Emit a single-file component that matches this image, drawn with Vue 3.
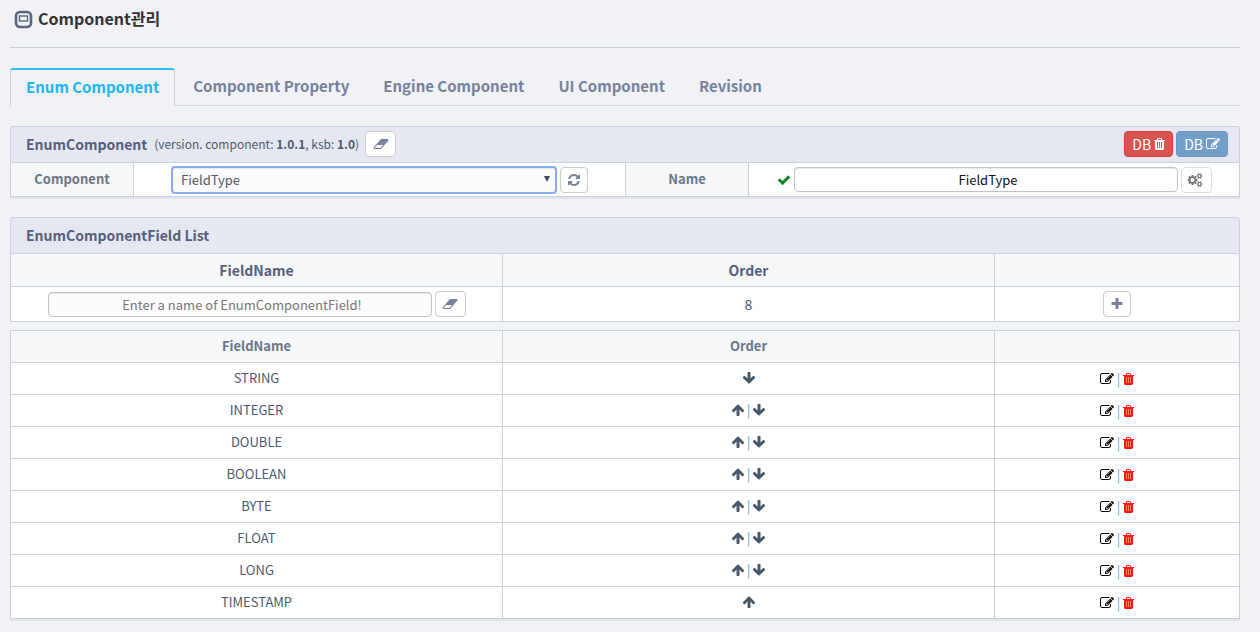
<script setup>
import { ref } from 'vue'

const icons = {
  trash: { x: 192, w: 1408, d: 'M704 1376v-704q0-14-9-23t-23-9h-64q-14 0-23 9t-9 23v704q0 14 9 23t23 9h64q14 0 23-9t9-23zm256 0v-704q0-14-9-23t-23-9h-64q-14 0-23 9t-9 23v704q0 14 9 23t23 9h64q14 0 23-9t9-23zm256 0v-704q0-14-9-23t-23-9h-64q-14 0-23 9t-9 23v704q0 14 9 23t23 9h64q14 0 23-9t9-23zm-544-992h448l-48-117q-7-9-17-11h-317q-10 2-17 11zm928 32v64q0 14-9 23t-23 9h-96v948q0 83-47 143.500t-113 60.500h-832q-66 0-113-58.500t-47-141.500v-952h-96q-14 0-23-9t-9-23v-64q0-14 9-23t23-9h309l70-167q15-37 54-63t79-26h320q40 0 79 26t54 63l70 167h309q14 0 23 9t9 23z' },
  edit: { x: 0, w: 1792, d: 'M888 1184l116-116-152-152-116 116v56h96v96h56zm440-720q-16-16-33 1l-350 350q-17 17-1 33t33-1l350-350q17-17 1-33zm80 594v190q0 119-84.500 203.500t-203.500 84.500h-832q-119 0-203.500-84.500t-84.500-203.500v-832q0-119 84.500-203.500t203.500-84.500h832q63 0 117 25 15 7 18 23 3 17-9 29l-49 49q-14 14-32 8-23-6-45-6h-832q-66 0-113 47t-47 113v832q0 66 47 113t113 47h832q66 0 113-47t47-113v-126q0-13 9-22l64-64q15-15 35-7t20 29zm-96-738l288 288-672 672h-288v-288zm444 132l-92 92-288-288 92-92q28-28 68-28t68 28l152 152q28 28 28 68t-28 68z' },
  up: { x: 0, w: 1792, d: 'M1675 971q0 51-37 90l-75 75q-38 38-91 38-54 0-90-38l-294-293v704q0 52-37.500 84.500t-90.500 32.500h-128q-53 0-90.500-32.500t-37.500-84.500v-704l-294 293q-36 38-90 38t-90-38l-75-75q-38-38-38-90 0-53 38-91l651-651q35-37 90-37 54 0 91 37l651 651q37 39 37 91z' },
  down: { x: 0, w: 1792, d: 'M1675 832q0 53-37 90l-651 652q-39 37-91 37-53 0-90-37l-651-652q-38-36-38-90 0-53 38-91l74-75q39-37 91-37 53 0 90 37l294 294v-704q0-52 38-90t90-38h128q52 0 90 38t38 90v704l294-294q37-37 90-37 52 0 91 37l75 75q37 39 37 91z' },
  plus: { x: 0, w: 1792, d: 'M1600 736v192q0 40-28 68t-68 28h-416v416q0 40-28 68t-68 28h-192q-40 0-68-28t-28-68v-416h-416q-40 0-68-28t-28-68v-192q0-40 28-68t68-28h416v-416q0-40 28-68t68-28h192q40 0 68 28t28 68v416h416q40 0 68 28t28 68z' },
  refresh: { x: 0, w: 1792, d: 'M1639 1056q0 5-1 7-64 268-268 434.500t-478 166.500q-146 0-282.500-55t-243.500-157l-129 129q-19 19-45 19t-45-19-19-45v-448q0-26 19-45t45-19h448q26 0 45 19t19 45-19 45l-137 137q71 66 161 102t187 36q134 0 250-65t186-179q11-17 53-117 8-23 30-23h192q13 0 22.500 9.500t9.500 22.500zm25-800v448q0 26-19 45t-45 19h-448q-26 0-45-19t-19-45 19-45l138-138q-148-137-349-137-134 0-250 65t-186 179q-11 17-53 117-8 23-30 23h-199q-13 0-22.500-9.500t-9.500-22.500v-7q65-268 270-434.500t480-166.500q146 0 284 55.500t245 156.500l130-129q19-19 45-19t45 19 19 45z' },
  check: { x: 0, w: 1792, d: 'M1671 566q0 40-28 68l-724 724-136 136q-28 28-68 28t-68-28l-136-136-362-362q-28-28-28-68t28-68l136-136q28-28 68-28t68 28l294 295 656-657q28-28 68-28t68 28l136 136q28 28 28 68z' },
  eraser: { x: 0, w: 2048, d: 'M960 1408l336-384h-768l-336 384h768zm1013-1077q15 34 9.500 71.500t-30.500 65.500l-896 1024q-38 44-96 44h-768q-38 0-69.500-20.500t-47.500-54.500q-15-34-9.500-71.500t30.500-65.500l896-1024q38-44 96-44h768q38 0 69.500 20.500t47.500 54.500z' },
  cogs: { x: 0, w: 2048, d: 'M832 896q0-106-75-181t-181-75-181 75-75 181 75 181 181 75 181-75 75-181zm768 512q0-52-38-90t-90-38-90 38-38 90q0 53 37.500 90.500t90.500 37.500 90.500-37.500 37.500-90.500zm0-1024q0-52-38-90t-90-38-90 38-38 90q0 53 37.500 90.500t90.500 37.500 90.500-37.500 37.500-90.500zm-384 421v185q0 10-7 19.500t-16 10.500l-155 24q-11 35-32 76 34 48 90 115 7 11 7 20 0 12-7 19-23 30-82.500 89.500t-78.500 59.500q-11 0-21-7l-115-90q-37 19-77 31-11 108-23 155-7 24-30 24h-186q-11 0-20-7.500t-10-17.500l-23-153q-34-10-75-31l-118 89q-7 7-20 7-11 0-21-8-144-133-144-160 0-9 7-19 10-14 41-53t47-61q-23-44-35-82l-152-24q-10-1-17-9.500t-7-19.500v-185q0-10 7-19.500t16-10.500l155-24q11-35 32-76-34-48-90-115-7-11-7-20 0-12 7-20 22-30 82-89t79-59q11 0 21 7l115 90q34-18 77-32 11-108 23-154 7-24 30-24h186q11 0 20 7.500t10 17.500l23 153q34 10 75 31l118-89q8-7 20-7 11 0 21 8 144 133 144 160 0 8-7 19-12 16-42 54t-45 60q23 48 34 82l152 23q10 2 17 10.500t7 19.500zm640 533v140q0 16-149 31-12 27-30 52 51 113 51 138 0 4-4 7-122 71-124 71-8 0-46-47t-52-68q-20 2-30 2t-30-2q-14 21-52 68t-46 47q-2 0-124-71-4-3-4-7 0-25 51-138-18-25-30-52-149-15-149-31v-140q0-16 149-31 13-29 30-52-51-113-51-138 0-4 4-7 4-2 35-20t59-34 30-16q8 0 46 46.500t52 67.500q20-2 30-2t30 2q51-71 92-112l6-2q4 0 124 70 4 3 4 7 0 25-51 138 17 23 30 52 149 15 149 31zm0-1024v140q0 16-149 31-12 27-30 52 51 113 51 138 0 4-4 7-122 71-124 71-8 0-46-47t-52-68q-20 2-30 2t-30-2q-14 21-52 68t-46 47q-2 0-124-71-4-3-4-7 0-25 51-138-18-25-30-52-149-15-149-31v-140q0-16 149-31 13-29 30-52-51-113-51-138 0-4 4-7 4-2 35-20t59-34 30-16q8 0 46 46.500t52 67.500q20-2 30-2t30 2q51-71 92-112l6-2q4 0 124 70 4 3 4 7 0 25-51 138 17 23 30 52 149 15 149 31z' }
}

const Icon = (props) => {
  const i = icons[props.name]
  return h('svg', {
    class: 'icon',
    viewBox: `${i.x} 0 ${i.w} 1792`,
    width: i.w / 128,
    height: 14,
    fill: 'currentColor',
    'aria-hidden': 'true'
  }, [
    props.slots && h('path', { d: 'M560 640h688v768h-688z', fill: props.slots }),
    h('path', { d: i.d })
  ])
}
Icon.props = ['name', 'slots']

const tabs = ['Enum Component', 'Component Property', 'Engine Component', 'UI Component', 'Revision']
const activeTab = ref('Enum Component')
const component = ref('FieldType')
const name = ref('FieldType')
const newField = ref('')
const fields = ref(['STRING', 'INTEGER', 'DOUBLE', 'BOOLEAN', 'BYTE', 'FLOAT', 'LONG', 'TIMESTAMP'])

function move(index, step) {
  const list = fields.value
  const [item] = list.splice(index, 1)
  list.splice(index + step, 0, item)
}
function add() {
  if (newField.value) fields.value.push(newField.value)
  newField.value = ''
}
</script>

<script>
import { h } from 'vue'
</script>

<template>
  <main class="page">
    <header class="title">
      <svg width="20" height="24" viewBox="0 0 20 24" fill="none" aria-hidden="true">
        <rect x="2" y="6" width="15" height="15" rx="4" stroke="#5a6580" stroke-width="2.600" />
        <rect x="5.500" y="10" width="8" height="5" stroke="#5a6580" stroke-width="1.400" />
      </svg>
      <h1>Component관리</h1>
    </header>

    <nav class="tabs">
      <a v-for="t in tabs" :key="t" href="#" :class="{ active: t === activeTab }" @click.prevent="activeTab = t">{{ t }}</a>
    </nav>

    <section class="panel shadow">
      <div class="panel-head">
        <h2>EnumComponent</h2>
        <span class="version">(version. component: <b>1.0.1</b>, ksb: <b>1.0</b>)</span>
        <button class="btn wide" type="button" aria-label="Clear"><Icon name="eraser" /></button>
        <div class="db">
          <button class="btn danger" type="button">DB <Icon name="trash" /></button>
          <button class="btn primary" type="button">DB <Icon name="edit" /></button>
        </div>
      </div>
      <div class="form">
        <label for="component">Component</label>
        <div class="cell">
          <div class="select">
            <select id="component" v-model="component"><option>FieldType</option></select>
            <svg width="6" height="6" viewBox="0 0 6 6" fill="#3c4b5c" aria-hidden="true"><path d="M0 0h6L3 6z" /></svg>
          </div>
          <button class="btn" type="button" aria-label="Refresh"><Icon name="refresh" /></button>
        </div>
        <label for="name">Name</label>
        <div class="cell">
          <Icon name="check" class="check" />
          <input id="name" v-model="name" class="name" type="text">
          <button class="btn wide light" type="button" aria-label="Settings"><Icon name="cogs" /></button>
        </div>
      </div>
    </section>

    <section class="list">
      <div class="panel-head"><h2>EnumComponentField List</h2></div>
      <table class="entry">
        <thead><tr><th>FieldName</th><th>Order</th><th class="last"></th></tr></thead>
        <tbody>
          <tr>
            <td>
              <div class="cell">
                <input v-model="newField" type="text" aria-label="FieldName" placeholder="Enter a name of EnumComponentField!">
                <button class="btn wide" type="button" aria-label="Clear" @click="newField = ''"><Icon name="eraser" /></button>
              </div>
            </td>
            <td>{{ fields.length }}</td>
            <td><div class="cell"><button class="btn" type="button" aria-label="Add" @click="add"><Icon name="plus" /></button></div></td>
          </tr>
        </tbody>
      </table>
      <table class="fields shadow">
        <thead><tr><th>FieldName</th><th>Order</th><th class="last"></th></tr></thead>
        <tbody>
          <tr v-for="(f, i) in fields" :key="f">
            <td>{{ f }}</td>
            <td>
              <div class="actions">
                <button v-if="i > 0" type="button" aria-label="Move up" @click="move(i, -1)"><Icon name="up" /></button>
                <span v-if="i > 0 && i < fields.length - 1" class="bar">|</span>
                <button v-if="i < fields.length - 1" type="button" aria-label="Move down" @click="move(i, 1)"><Icon name="down" /></button>
              </div>
            </td>
            <td>
              <div class="actions wide">
                <button class="edit" type="button" aria-label="Edit"><Icon name="edit" /></button>
                <span class="bar">|</span>
                <button class="delete" type="button" aria-label="Delete" @click="fields.splice(i, 1)"><Icon name="trash" slots="#ff8a50" /></button>
              </div>
            </td>
          </tr>
        </tbody>
      </table>
    </section>
  </main>
</template>

<style>
body {
  background: #f1f2f6;
}
</style>

<style scoped>
* {
  box-sizing: border-box;
}
.page {
  padding: 0 20px 10px 10px;
  font-family: "Noto Sans CJK KR", "Noto Sans", sans-serif;
  font-size: 14px;
  line-height: 20px;
  color: #4b5a6e;
}
.icon {
  display: block;
  flex: none;
}
.title {
  display: flex;
  align-items: center;
  gap: 4px;
  height: 48px;
  padding: 0 4px 12px;
  border-bottom: 1px solid #c8d2dd;
}
h1 {
  margin: 0;
  font-size: 16px;
  font-weight: 700;
  color: #333;
}
.tabs {
  display: flex;
  height: 38px;
  margin-top: 20px;
  border-bottom: 1px solid #d3dae3;
}
.tabs a {
  height: 37px;
  padding: 8px 17px 0;
  font-size: 15px;
  font-weight: 700;
  color: #77819b;
  text-decoration: none;
}
.tabs a.active {
  height: 38px;
  margin-right: 1px;
  padding: 7px 15px 0;
  border: 1px solid #c8d2dd;
  border-top: 2px solid #2fbdfb;
  border-bottom: 0;
  border-radius: 3px 3px 0 0;
  background: #f1f2f6;
  color: #1fb5f6;
}
.panel,
.list {
  margin-top: 20px;
}
.shadow {
  box-shadow: 0 2px 0 #e2e4ea;
}
.panel-head {
  display: flex;
  align-items: center;
  height: 37px;
  padding: 0 11px 1px 15px;
  border: 1px solid #c8d2dd;
  border-radius: 3px 3px 0 0;
  background: #e5e8f0;
}
h2 {
  margin: 0;
  font-size: 14px;
  font-weight: 700;
  color: #55607e;
}
.version {
  margin: 0 6px 0 7px;
  font-size: 12px;
}
.db {
  display: flex;
  gap: 3px;
  margin-left: auto;
}
.btn {
  display: flex;
  align-items: center;
  justify-content: center;
  gap: 3px;
  width: 28px;
  height: 26px;
  padding: 0;
  border: 1px solid #ccc;
  border-radius: 4px;
  background: #fff;
  color: #77819b;
  font: inherit;
}
.btn.wide {
  width: 31px;
}
.btn.light {
  border-color: #ddd;
  color: #777;
}
.btn.danger,
.btn.primary {
  width: auto;
  padding: 0 7px;
  color: #fff;
}
.btn.danger {
  border-color: #d43f3a;
  background: #d9534f;
}
.btn.primary {
  border-color: #6a96bf;
  background: #719fc9;
}
.form {
  display: grid;
  grid-template-columns: 1fr 4fr 1fr 4fr;
  height: 34px;
  border-bottom: 1px solid #c8d2dd;
  background: #fff;
}
.form > * {
  border-left: 1px solid #c8d2dd;
}
.form > :last-child {
  border-right: 1px solid #c8d2dd;
}
.form label {
  background: #f6f7f9;
  font-size: 13px;
  font-weight: 700;
  line-height: 32px;
  text-align: center;
  color: #6b7688;
}
.cell {
  display: flex;
  align-items: center;
  justify-content: center;
  gap: 3px;
}
.check {
  color: #0d8420;
}
input,
select {
  width: 384px;
  height: 25px;
  padding: 0 8px 0 13px;
  border: 1px solid #bfc4c9;
  border-radius: 4px;
  background: #fcfcfe;
  box-shadow: inset 0 1px 1px #e6e8ea;
  font: inherit;
  font-size: 13px;
  text-align: center;
  color: #4b5a6e;
}
input::placeholder {
  color: #777;
}
input.name {
  background: #fff;
  color: #111;
}
.select {
  position: relative;
}
select {
  display: block;
  width: 386px;
  height: 28px;
  padding: 0 8px;
  border: 2px solid #86aeea;
  appearance: none;
  outline: 0;
  text-align: left;
}
.select svg {
  position: absolute;
  top: 10px;
  right: 7px;
}
table {
  width: 100%;
  table-layout: fixed;
  border-spacing: 0;
  background: #fff;
}
th,
td {
  padding: 0;
  border-left: 1px solid #c8d2dd;
  border-bottom: 1px solid #c8d2dd;
  text-align: center;
}
th:last-child,
td:last-child {
  border-right: 1px solid #c8d2dd;
}
th {
  width: 40%;
  background: #f6f7f9;
}
th.last {
  width: 20%;
}
.entry th {
  height: 33px;
  color: #55607e;
}
.entry td {
  height: 35px;
}
.fields {
  margin-top: 8px;
  border-top: 1px solid #c8d2dd;
  font-size: 13px;
}
.fields th,
.fields td {
  height: 32px;
}
.fields th,
.fields td:not(:last-child) {
  padding-bottom: 1px;
}
.fields th {
  color: #6b7688;
}
.actions {
  display: flex;
  align-items: center;
  justify-content: center;
  gap: 2px;
}
.actions.wide {
  gap: 3px;
}
.actions button {
  padding: 0;
  border: 0;
  background: none;
  color: #46586a;
}
.actions .edit {
  color: #000;
}
.actions .delete {
  color: #fb1414;
}
.bar {
  color: #5fa8e0;
}
</style>
